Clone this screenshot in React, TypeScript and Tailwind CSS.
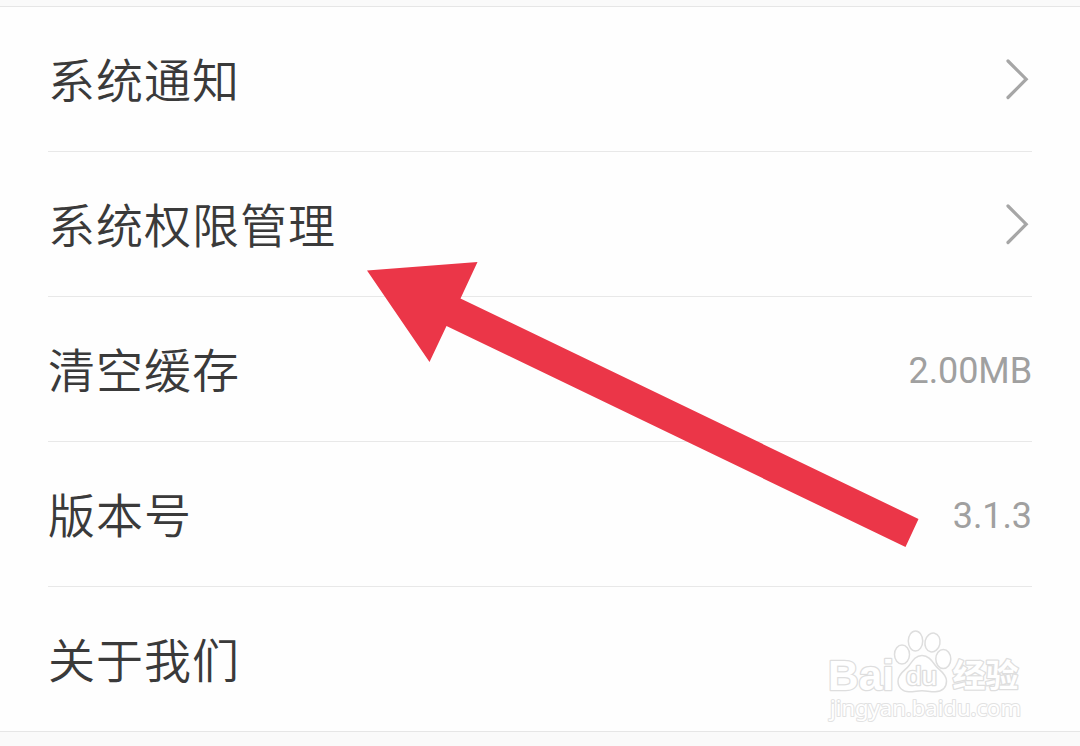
import React from 'react';

type SettingItem = {
  id: string;
  label: string;
  value?: string;
  link?: boolean;
};

const items: SettingItem[] = [
  { id: 'notice', label: '系统通知', link: true },
  { id: 'permission', label: '系统权限管理', link: true },
  { id: 'cache', label: '清空缓存', value: '2.00MB' },
  { id: 'version', label: '版本号', value: '3.1.3' },
  { id: 'about', label: '关于我们' },
];

function Chevron() {
  return (
    <svg className="mr-[3px] h-[42px] w-[24px]" viewBox="0 0 24 42" fill="none">
      <path d="M3 3 L21.2 21.2 L3 39.5" stroke="#a6a6a6" strokeWidth="3.2" strokeLinecap="round" />
    </svg>
  );
}

function Arrow() {
  return (
    <svg className="absolute left-[360px] top-[250px] h-[310px] w-[570px]" viewBox="360 250 570 310">
      <polygon points="367,270.5 477.5,262 460.5,298.5 918.5,519 905.5,547 446.5,326 429.5,362" fill="#eb3648" />
    </svg>
  );
}

function Watermark() {
  return (
    <svg className="absolute left-[820px] top-[620px] h-[110px] w-[220px]" viewBox="0 0 220 110">
      <g fill="#fff" stroke="#dedede" strokeWidth="1.5" strokeLinejoin="round">
        <ellipse cx="82" cy="34.5" rx="7.5" ry="9.5" />
        <ellipse cx="95.5" cy="21" rx="7.2" ry="10" />
        <ellipse cx="112.5" cy="22.5" rx="7.5" ry="9.5" transform="rotate(12 112.5 22.5)" />
        <ellipse cx="123.3" cy="39" rx="7.5" ry="9.5" />
        <path d="M102 35.5c-6 0-9 4.5-12.5 9.5c-3.5 5-11.5 8-11.5 16c0 7 5 10.7 11 10.7c5 0 9-1 13-1s8 1 13 1c7 0 11.5-4 11.5-10.7c0-8-8-11-11.5-16c-3.5-5-7-9.5-13-9.5z" />
      </g>
      <g fill="#fff" stroke="#dedede" strokeWidth="2.6" strokeLinejoin="round" paintOrder="stroke">
        <text x="8" y="70" textLength="66" lengthAdjust="spacingAndGlyphs" fontSize="43" className="font-['Liberation_Sans',sans-serif] font-bold">Bai</text>
        <text x="86" y="65" textLength="31" lengthAdjust="spacingAndGlyphs" fontSize="25" className="font-['Liberation_Sans',sans-serif]">du</text>
        <text x="132.5" y="66.5" textLength="66" lengthAdjust="spacingAndGlyphs" fontSize="32" className="font-['Noto_Sans_CJK_SC',sans-serif] font-bold">经验</text>
        <text x="10" y="96" textLength="191" lengthAdjust="spacingAndGlyphs" fontSize="22" strokeWidth="2" stroke="#e2e2e2" className="font-['Noto_Sans',sans-serif]">jingyan.baidu.com</text>
      </g>
    </svg>
  );
}

export default function App() {
  return (
    <main className="relative flex h-[746px] w-[1080px] flex-col overflow-hidden bg-[#fafafa] pt-[6px] font-['Roboto','Noto_Sans_CJK_SC',sans-serif]">
      <ul className="border-y border-[#e6e6e6] bg-[#fefefe] px-12">
        {items.map((item) => (
          <li key={item.id} className="flex h-[145px] items-center justify-between border-b border-[#e8e8e8] last:h-[144px] last:border-b-0">
            <span className="pt-[6px] text-[47px] leading-[72px] font-[350] tracking-[1px] text-[#3a3a3a]">{item.label}</span>
            {item.value && <span className="pt-[4px] text-[36px] leading-[48px] tracking-[-0.1px] text-[#a0a0a0]">{item.value}</span>}
            {item.link && <Chevron />}
          </li>
        ))}
      </ul>
      <Arrow />
      <Watermark />
    </main>
  );
}
